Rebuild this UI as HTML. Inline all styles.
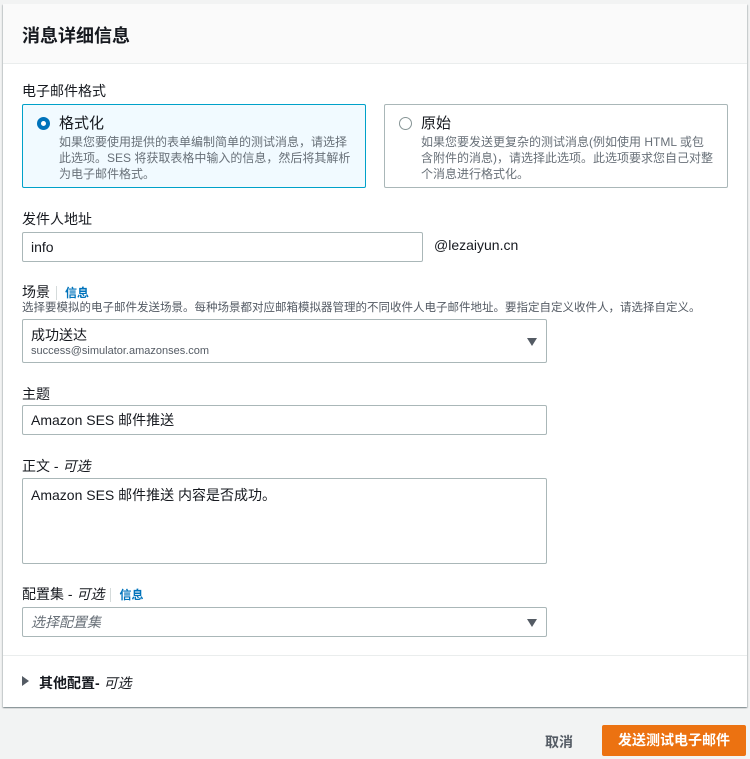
<!DOCTYPE html>
<html><head><meta charset="utf-8"><style>
*{box-sizing:border-box;margin:0;padding:0}
body{width:750px;height:759px;background:#f2f3f3;font-family:"Liberation Sans","Noto Sans CJK SC",sans-serif;color:#16191f;position:relative;overflow:hidden}
.a{position:absolute}
.card{left:3px;top:4px;width:744px;height:703px;background:#fff;box-shadow:0 1px 1px rgba(0,28,36,.3),1px 1px 1px rgba(0,28,36,.15),-1px 1px 1px rgba(0,28,36,.15)}
.hdr{left:0;top:0;width:744px;height:60px;background:#fafafa;border-bottom:1px solid #eaeded}
.lbl{font-size:14px;color:#16191f}
.inp{border:1px solid #aab7b8;border-radius:2px;background:#fff;font-size:14px;padding-left:8px}
.info{color:#0073bb;font-size:12px;font-weight:bold;border-left:1px solid #d5dbdb;padding-left:8px;margin-left:6px}
.desc{font-size:12px;color:#687078;line-height:16px}
.tri{width:0;height:0;border-left:5px solid transparent;border-right:5px solid transparent;border-top:8px solid #545b64}
</style></head><body>
<div class="a card">
<div class="a hdr"><div class="a" style="left:19px;top:18px;font-size:18px;font-weight:bold">消息详细信息</div></div>
<div class="a lbl" style="left:19px;top:77px">电子邮件格式</div>
<div class="a" style="left:19px;top:100px;width:344px;height:84px;background:#f1faff;border:1px solid #00a1c9;border-radius:2px">
 <div class="a" style="left:14px;top:12px;width:13px;height:13px;border-radius:50%;border:4px solid #0073bb;background:#fff"></div>
 <div class="a" style="left:36px;top:7px;font-size:15px">格式化</div>
 <div class="a desc" style="left:36px;top:29px;width:292px">如果您要使用提供的表单编制简单的测试消息，请选择此选项。SES 将获取表格中输入的信息，然后将其解析为电子邮件格式。</div>
</div>
<div class="a" style="left:381px;top:100px;width:344px;height:84px;border:1px solid #aab7b8;border-radius:2px">
 <div class="a" style="left:14px;top:12px;width:13px;height:13px;border-radius:50%;border:1px solid #879596;background:#fff"></div>
 <div class="a" style="left:36px;top:7px;font-size:15px">原始</div>
 <div class="a desc" style="left:36px;top:29px;width:292px">如果您要发送更复杂的测试消息(例如使用 HTML 或包含附件的消息)，请选择此选项。此选项要求您自己对整个消息进行格式化。</div>
</div>
<div class="a lbl" style="left:19px;top:205px">发件人地址</div>
<div class="a inp" style="left:19px;top:228px;width:401px;height:30px;line-height:28px">info</div>
<div class="a lbl" style="left:431px;top:233px">@lezaiyun.cn</div>
<div class="a lbl" style="left:19px;top:278px">场景<span class="info">信息</span></div>
<div class="a desc" style="left:19px;top:296px;font-size:11.5px;color:#545b64">选择要模拟的电子邮件发送场景。每种场景都对应邮箱模拟器管理的不同收件人电子邮件地址。要指定自定义收件人，请选择自定义。</div>
<div class="a inp" style="left:19px;top:315px;width:525px;height:44px">
 <div class="a" style="left:8px;top:5px;font-size:14px">成功送达</div>
 <div class="a" style="left:8px;top:25px;font-size:11px;color:#545b64">success@simulator.amazonses.com</div>
 <div class="a tri" style="left:504px;top:18px"></div>
</div>
<div class="a lbl" style="left:19px;top:380px">主题</div>
<div class="a inp" style="left:19px;top:401px;width:525px;height:30px;line-height:28px">Amazon SES 邮件推送</div>
<div class="a lbl" style="left:19px;top:452px">正文 - <i>可选</i></div>
<div class="a inp" style="left:19px;top:474px;width:525px;height:86px;padding-top:6px">Amazon SES 邮件推送 内容是否成功。</div>
<div class="a lbl" style="left:19px;top:580px">配置集 - <i>可选</i><span class="info">信息</span></div>
<div class="a inp" style="left:19px;top:603px;width:525px;height:30px;line-height:28px;color:#687078;font-style:italic">选择配置集<div class="a tri" style="left:504px;top:11px"></div></div>
<div class="a" style="left:0;top:651px;width:744px;border-top:1px solid #eaeded"></div>
<div class="a" style="left:19px;top:672px;width:0;height:0;border-top:5px solid transparent;border-bottom:5px solid transparent;border-left:7px solid #545b64"></div>
<div class="a lbl" style="left:36px;top:669px;font-weight:bold">其他配置- <i style="font-weight:normal">可选</i></div>
</div>
<div class="a" style="left:545px;top:732px;font-size:14px;font-weight:bold;color:#545b64">取消</div>
<div class="a" style="left:602px;top:725px;width:144px;height:31px;background:#ec7211;border-radius:2px;color:#fff;font-size:14px;font-weight:bold;text-align:center;line-height:31px">发送测试电子邮件</div>
</body></html>
